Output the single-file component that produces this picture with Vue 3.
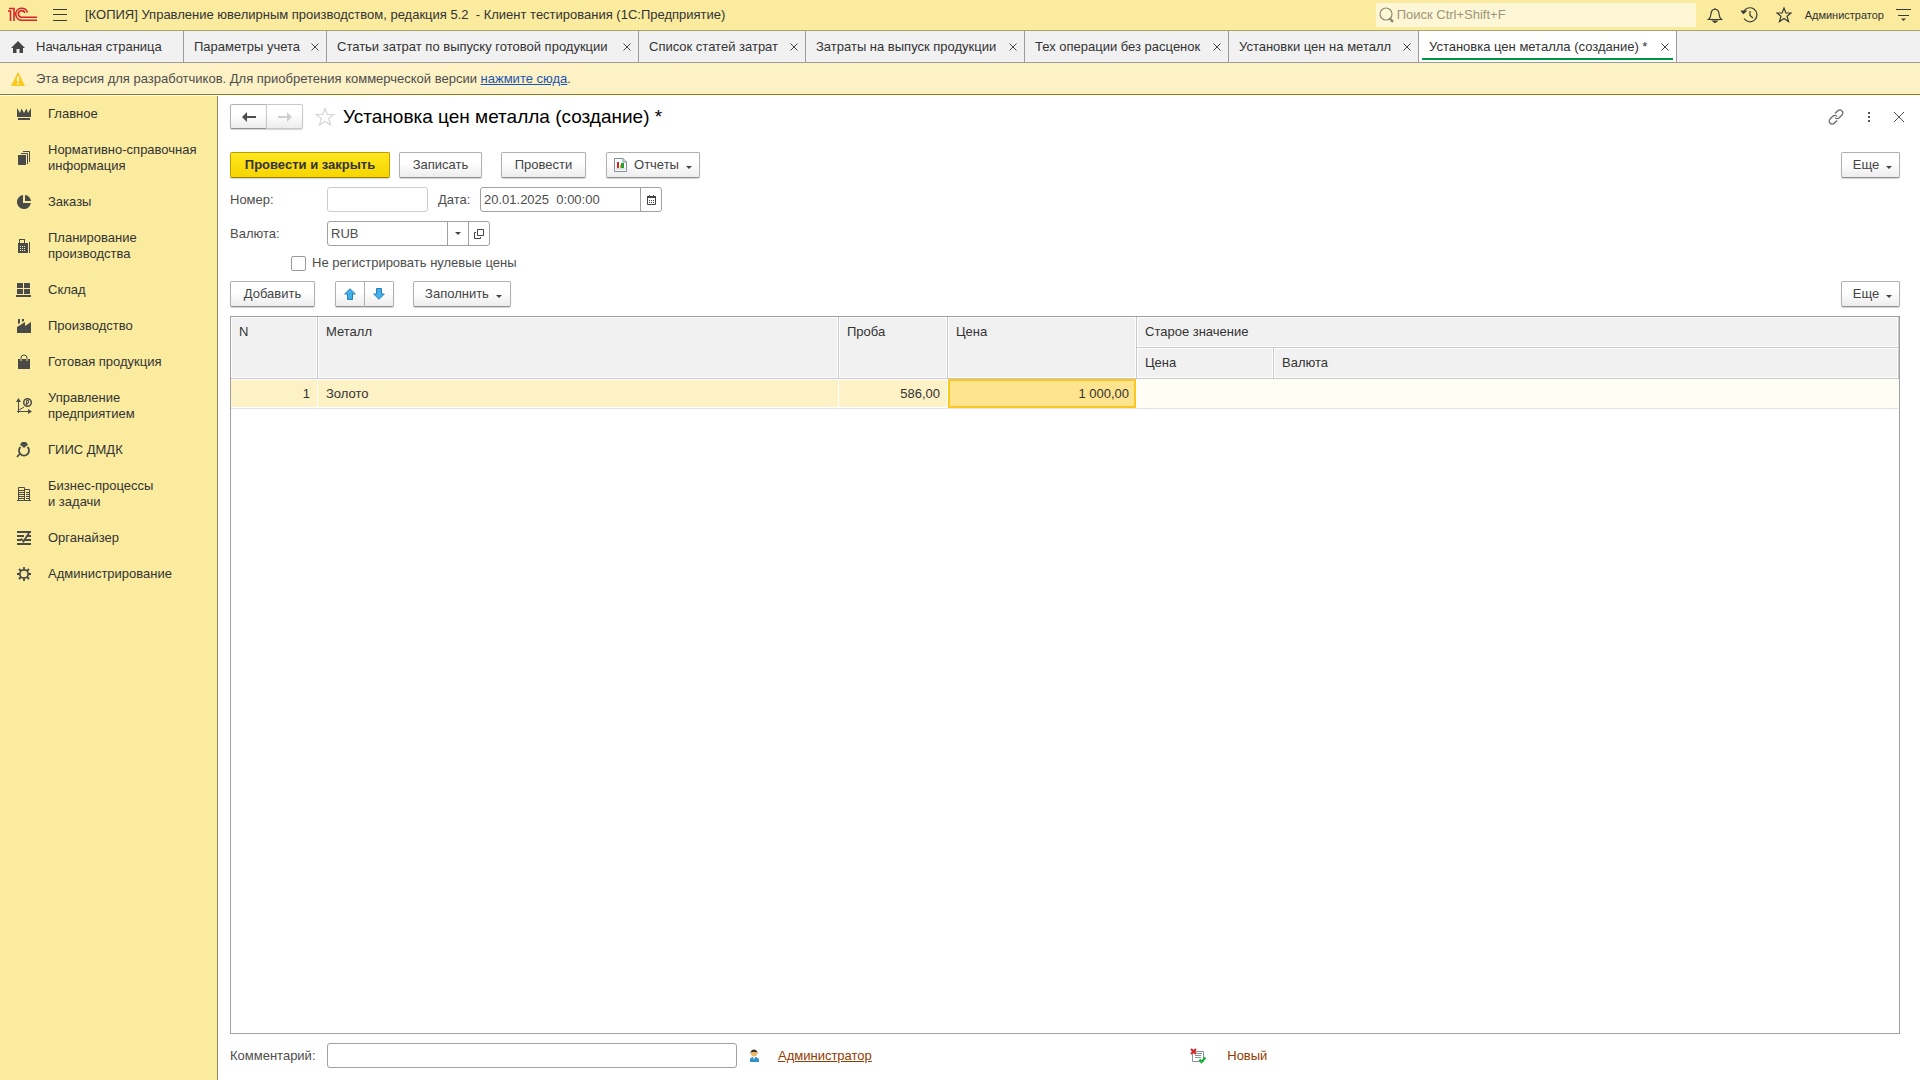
<script setup>
import { ref } from 'vue'

const tabs = [
  { title: 'Параметры учета', width: 143 },
  { title: 'Статьи затрат по выпуску готовой продукции', width: 312 },
  { title: 'Список статей затрат', width: 167 },
  { title: 'Затраты на выпуск продукции', width: 219 },
  { title: 'Тех операции без расценок', width: 204 },
  { title: 'Установки цен на металл', width: 190 },
  { title: 'Установка цен металла (создание) *', width: 258 }
]
const activeTab = ref(6)

const sections = [
  { title: ['Главное'], fill: 'M1 2L4 7L5.500 2.500L8 7L10.500 2.500L12 7L15 2V11H1ZM2 12H14V14H2Z' },
  { title: ['Нормативно-справочная', 'информация'], fill: 'M2 5H10V15H2Z', line: 'M5 3.5H11.5V14M7 1.5H13.500V12' },
  { title: ['Заказы'], fill: 'M7 1.100A7 7 0 1 0 14.900 9H7ZM9 1A6.500 6.500 0 0 1 15 7H9Z' },
  { title: ['Планирование', 'производства'], fill: 'M2 5H3V1H9V5H12V15H2ZM4 2V5H8V2ZM4 8V9H5V8ZM6 8V9H7V8ZM8 8V9H9V8ZM4 10V11H5V10ZM6 10V11H7V10ZM8 10V11H9V10ZM4 12V13H5V12ZM6 12V13H7V12ZM8 12V13H9V12ZM13 4H14V15H13Z' },
  { title: ['Склад'], fill: 'M1 1H7V6H1ZM8 1H14V6H8ZM1 7H7V12H1ZM8 7H14V12H8ZM0 13H15V15H0Z' },
  { title: ['Производство'], fill: 'M1 15V9L9 4V8L15 4V15ZM2 1H4V5L2 6ZM6 1H8V3L6 4Z' },
  { title: ['Готовая продукция'], fill: 'M2 5H14V15H2Z', line: 'M5 7V4A3 3 0 0 1 11 4V7', cut: 'M5 5V7M11 5V7' },
  { title: ['Управление', 'предприятием'], fill: 'M0 4L2.500 0L5 4ZM12 11L16 13.500L12 16Z', line: 'M2.500 2V15M1 13.500H14M3 12L8 9', ring: true },
  { title: ['ГИИС ДМДК'], fill: 'M4 2.500L6 0H10L12 2.500L8 6Z', bold: 'M4.500 5A5 5 0 1 0 11.500 5M4.500 11L1 15' },
  { title: ['Бизнес-процессы', 'и задачи'], line: 'M1 14.500H15M2.500 14V1.500H8.500V14M9 3.500H13.500V14M3 4.500H8M3 6.500H8M3 8.500H8M3 10.500H8M3 12.500H8M10 6.500H13M10 8.500H13M10 10.500H13M10 12.500H13' },
  { title: ['Органайзер'], bold: 'M1 2H15M1 6H8M11 6H15M1 10H5M9 10H15M1 14H15M5 8.500L7.500 11.500L13 3' },
  { title: ['Администрирование'], gear: true }
]

const rows = [{ n: 1, metal: 'Золото', probe: '586,00', price: '1 000,00', oldPrice: '', oldCurrency: '' }]

const number = ref('')
const date = ref('20.01.2025  0:00:00')
const currency = ref('RUB')
const skipZero = ref(false)
const comment = ref('')
const search = ref('')
</script>

<template>
  <div class="app">
    <header class="titlebar">
      <svg class="logo" width="30" height="16" viewBox="0 0 30 16" fill="none" stroke="#d8232a" stroke-width="1.600">
        <path d="M0 4H2.500V14M1 1.500H6V14" />
        <path d="M19.500 5.500A6 6 0 1 0 14 13.200H29" />
        <path d="M16.800 6A3.300 3.300 0 1 0 14 10.200H29" />
      </svg>
      <button class="flat menu" aria-label="Главное меню">
        <svg width="14" height="12" viewBox="0 0 14 12" stroke="#3a3a36" stroke-width="1"><path d="M0 .5H14M0 5.500H14M0 11.500H14" /></svg>
      </button>
      <span class="app-title">[КОПИЯ] Управление ювелирным производством, редакция 5.2&nbsp; - Клиент тестирования (1С:Предприятие)</span>
      <label class="search">
        <svg width="16" height="18" viewBox="0 0 16 18" fill="none" stroke="#8f8b70" stroke-width="1.200"><circle cx="7" cy="8" r="6" /><path d="M10.500 12L14 16" stroke-width="2.500" /></svg>
        <input v-model="search" type="text" placeholder="Поиск Ctrl+Shift+F" aria-label="Поиск" />
      </label>
      <div class="tools">
        <button class="flat" aria-label="Оповещения">
          <svg width="16" height="16" viewBox="0 0 16 16" fill="none" stroke="#3a3a36" stroke-width="1.200"><path d="M8 1V2M1.500 12.500H14.500C11.500 10.500 12.500 7 11.500 4.500C10.500 1.500 5.500 1.500 4.500 4.500C3.500 7 4.500 10.500 1.500 12.500Z" /><path d="M6 14H10L8 15.500Z" fill="#3a3a36" /></svg>
        </button>
        <button class="flat" aria-label="История">
          <svg width="17" height="16" viewBox="0 0 17 16" fill="none" stroke="#3a3a36" stroke-width="1.200"><path d="M2.500 5A7 7 0 1 1 3 11.500M9 4V8.500L12 11" /><path d="M0 4L2.500 6.500L5 4Z" fill="#3a3a36" /></svg>
        </button>
        <button class="flat" aria-label="Избранное">
          <svg width="16" height="16" viewBox="0 0 16 16" fill="none" stroke="#3a3a36" stroke-width="1.200"><path d="M8 1L9.900 6H15L11 9.200L12.500 14.500L8 11.400L3.500 14.500L5 9.200L1 6H6.100Z" /></svg>
        </button>
        <button class="flat user">Администратор</button>
        <button class="flat" aria-label="Настройка окна">
          <svg width="15" height="14" viewBox="0 0 15 14" stroke="#3a3a36" stroke-width="1"><path d="M0 1.500H15M2 7.500H13" /><path d="M5 10.500H10L7.500 13Z" fill="#3a3a36" stroke="none" /></svg>
        </button>
      </div>
    </header>

    <nav class="tabs">
      <button class="tab home">
        <svg width="14" height="12" viewBox="0 0 14 12" fill="#444"><path d="M7 0L14 7H12V12H8.500V8H5.500V12H2V7H0Z" /></svg>
        <span>Начальная страница</span>
      </button>
      <div v-for="(tab, i) in tabs" :key="tab.title" class="tab" :class="{ active: i === activeTab }" :style="{ width: tab.width + 'px' }">
        <button class="flat" @click="activeTab = i">{{ tab.title }}</button>
        <button class="flat close" aria-label="Закрыть вкладку">
          <svg width="8" height="8" viewBox="0 0 8 8" stroke="#444"><path d="M.5 .5L7.500 7.500M7.500 .5L.5 7.500" /></svg>
        </button>
      </div>
    </nav>

    <div class="notice">
      <svg width="14" height="14" viewBox="0 0 14 14"><path d="M7 0L14 14H0Z" fill="#fbc91e" /><path d="M7 4.500V9.500M7 11V12.500" stroke="#fff" stroke-width="1.600" /></svg>
      <p>Эта версия для разработчиков. Для приобретения коммерческой версии <a href="#">нажмите сюда</a>.</p>
    </div>

    <div class="body">
      <aside class="sidebar">
        <button v-for="s in sections" :key="s.title[0]" class="section">
          <svg width="16" height="16" viewBox="0 0 16 16" fill="none" stroke="#4a4a48">
            <path v-if="s.fill" :d="s.fill" fill="#4a4a48" fill-rule="evenodd" stroke="none" />
            <path v-if="s.line" :d="s.line" />
            <path v-if="s.bold" :d="s.bold" stroke-width="1.800" />
            <path v-if="s.cut" :d="s.cut" stroke="#faeb9f" />
            <g v-if="s.ring"><circle cx="11.500" cy="4.500" r="3.800" stroke-width="1.500" /><path d="M10.500 7V2.500H12.500V5H10M9.500 6H12" /></g>
            <g v-if="s.gear"><circle cx="8" cy="8" r="4.200" stroke-width="1.800" /><path d="M8 1V4M8 12V15M1 8H4M12 8H15M3 3L5 5M11 11L13 13M13 3L11 5M5 11L3 13" stroke-width="1.800" /></g>
          </svg>
          <span><template v-for="(line, i) in s.title" :key="line"><br v-if="i" />{{ line }}</template></span>
        </button>
      </aside>

      <main class="form">
        <div class="form-head">
          <div class="group">
            <button class="btn nav" aria-label="Назад">
              <svg width="14" height="10" viewBox="0 0 14 10" fill="#4d4d4d"><path d="M0 5L5 0V4H14V6H5V10Z" /></svg>
            </button>
            <button class="btn nav" aria-label="Вперед" disabled>
              <svg width="14" height="10" viewBox="0 0 14 10" fill="#cfcfcf"><path d="M14 5L9 0V4H0V6H9V10Z" /></svg>
            </button>
          </div>
          <button class="flat star" aria-label="В избранное">
            <svg width="20" height="20" viewBox="0 0 20 20" fill="none" stroke="#d4d6dc" stroke-width="1.200"><path d="M10 1.500L12.300 7.500H18.800L13.700 11.500L15.500 18L10 14.200L4.500 18L6.300 11.500L1.200 7.500H7.700Z" /></svg>
          </button>
          <h1>Установка цен металла (создание) *</h1>
          <div class="head-tools">
            <button class="flat" aria-label="Получить ссылку">
              <svg width="16" height="16" viewBox="0 0 16 16" fill="none" stroke="#666" stroke-width="1.200"><path d="M7 4.500L9.500 2C11.500 0 13 .8 14 2C15.200 3.200 15 4.700 14 6L11 9C9.700 10 8 10 7 8.500M9 11.500L6.500 14C4.500 16 3 15.200 2 14C.8 12.800 1 11.300 2 10L5 7C6.300 6 8 6 9 7.500" /></svg>
            </button>
            <button class="flat" aria-label="Дополнительно">
              <svg width="4" height="12" viewBox="0 0 4 12" fill="#555"><path d="M1 1H3V3H1ZM1 5H3V7H1ZM1 9H3V11H1Z" /></svg>
            </button>
            <button class="flat" aria-label="Закрыть">
              <svg width="10" height="10" viewBox="0 0 10 10" stroke="#555"><path d="M0 0L10 10M10 0L0 10" /></svg>
            </button>
          </div>
        </div>

        <div class="bar commands">
          <button class="btn primary">Провести и закрыть</button>
          <button class="btn save">Записать</button>
          <button class="btn post">Провести</button>
          <button class="btn reports">
            <svg width="13" height="14" viewBox="0 0 13 14" fill="none"><path d="M.5 .5H9L12.500 4V13.500H.5Z" fill="#fff" stroke="#7d8f9c" /><path d="M9 .5V4H12.500" stroke="#7d8f9c" /><path d="M3 4H5V10H3Z" fill="#e02020" /><path d="M6 7H7V10H6Z" fill="#f0a020" /><path d="M7 5H10V10H7Z" fill="#22a030" /><path d="M2 11H11" stroke="#b8c4cc" /></svg>
            Отчеты<i class="caret"></i>
          </button>
          <button class="btn more">Еще<i class="caret"></i></button>
        </div>

        <div class="field-row">
          <label class="caption" for="number">Номер:</label>
          <div class="field muted number"><input id="number" v-model="number" type="text" /></div>
          <label class="date-caption" for="date">Дата:</label>
          <div class="field date">
            <input id="date" v-model="date" type="text" />
            <button aria-label="Выбрать дату">
              <svg width="9" height="10" viewBox="0 0 9 10" fill="none" stroke="#444"><path d="M.5 2.500H8.500V9.500H.5Z" /><path d="M0 2H9" stroke-width="2" /><path d="M2.500 0V2M6.500 0V2" /><path d="M2 5.500H3M4 5.500H5M6 5.500H7M2 7.500H3M4 7.500H5M6 7.500H7" /></svg>
            </button>
          </div>
        </div>

        <div class="field-row">
          <label class="caption" for="currency">Валюта:</label>
          <div class="field currency">
            <input id="currency" v-model="currency" type="text" />
            <button aria-label="Выбрать из списка"><i class="caret"></i></button>
            <button aria-label="Открыть">
              <svg width="10" height="10" viewBox="0 0 10 10" fill="none" stroke="#444"><path d="M3.500 .5H9.500V6.500H3.500Z" /><path d="M2 3.500H.5V9.500H6.500V8" /></svg>
            </button>
          </div>
        </div>

        <label class="check"><input v-model="skipZero" type="checkbox" />Не регистрировать нулевые цены</label>

        <div class="bar list-bar">
          <button class="btn add">Добавить</button>
          <div class="group">
            <button class="btn move" aria-label="Переместить вверх">
              <svg width="12" height="12" viewBox="0 0 12 12" fill="#3fb0ec" stroke="#2b7fb4"><path d="M6 .7L11.300 6H8.500V11.500H3.500V6H.7Z" /></svg>
            </button>
            <button class="btn move" aria-label="Переместить вниз">
              <svg width="12" height="12" viewBox="0 0 12 12" fill="#3fb0ec" stroke="#2b7fb4"><path d="M6 11.300L.7 6H3.500V.5H8.500V6H11.300Z" /></svg>
            </button>
          </div>
          <button class="btn fill">Заполнить<i class="caret"></i></button>
          <button class="btn more">Еще<i class="caret"></i></button>
        </div>

        <div class="grid">
          <table>
            <colgroup>
              <col class="c-n" /><col class="c-metal" /><col class="c-probe" /><col class="c-price" /><col class="c-old" /><col />
            </colgroup>
            <thead>
              <tr>
                <th rowspan="2">N</th>
                <th rowspan="2">Металл</th>
                <th rowspan="2">Проба</th>
                <th rowspan="2">Цена</th>
                <th colspan="2">Старое значение</th>
              </tr>
              <tr>
                <th>Цена</th>
                <th>Валюта</th>
              </tr>
            </thead>
            <tbody>
              <tr v-for="row in rows" :key="row.n">
                <td class="num">{{ row.n }}</td>
                <td>{{ row.metal }}</td>
                <td class="num">{{ row.probe }}</td>
                <td class="num current">{{ row.price }}</td>
                <td class="old">{{ row.oldPrice }}</td>
                <td class="old">{{ row.oldCurrency }}</td>
              </tr>
            </tbody>
          </table>
        </div>

        <footer class="form-foot">
          <div class="foot-left">
            <label class="caption" for="comment">Комментарий:</label>
            <div class="field comment"><input id="comment" v-model="comment" type="text" /></div>
            <svg width="10" height="14" viewBox="0 0 10 14"><path d="M1 13V10L3 8H7L10 10V13Z" fill="#3490c4" /><path d="M4 8H6L5 11Z" fill="#fff" /><circle cx="5" cy="4.500" r="3" fill="#eab765" /><path d="M1.500 5C1 -1 9 -1 8.500 5L7.500 3H2.500Z" fill="#3c3128" /></svg>
            <a href="#">Администратор</a>
          </div>
          <div class="foot-right">
            <svg width="17" height="16" viewBox="0 0 17 16" fill="none"><path d="M2.500 3.500H13.500V13.500H2.500Z" fill="#fff" stroke="#8795a5" /><path d="M7 5.500H12M5 7.500H11M5 9.500H11" stroke="#8795a5" /><path d="M1 1L6 6M6 1L1 6" stroke="#d62828" stroke-width="2.200" /><path d="M9.500 11.500L11.500 14L15.500 9.500" stroke="#17b232" stroke-width="2.200" /></svg>
            <span>Новый</span>
          </div>
        </footer>
      </main>
    </div>
  </div>
</template>

<style>
body {
  margin: 0;
}
</style>

<style scoped>
.app {
  display: flex;
  flex-direction: column;
  min-height: 100vh;
  background: #fff;
  color: #333;
  font: 13px/16px "Liberation Sans", Arial, sans-serif;
}
.app * {
  box-sizing: border-box;
}
svg {
  display: block;
  flex: none;
}
button,
input {
  font: inherit;
  color: inherit;
}
.flat {
  display: flex;
  align-items: center;
  padding: 0;
  border: 0;
  background: none;
  white-space: nowrap;
}

.titlebar {
  display: flex;
  align-items: center;
  height: 31px;
  padding: 0 9px 0 8px;
  background: #faeb9f;
  border-bottom: 1px solid #aba36c;
}
.menu {
  margin: 0 18px 0 15px;
}
.app-title {
  flex: 1;
  white-space: nowrap;
}
.search {
  display: flex;
  align-items: center;
  gap: 2px;
  width: 320px;
  height: 24px;
  padding-left: 3px;
  background: #fdf7d6;
  border-radius: 2px;
}
.search input {
  flex: 1;
  min-width: 0;
  padding: 0;
  border: 0;
  outline: 0;
  background: none;
}
.search input::placeholder {
  color: #9b967a;
}
.tools {
  display: flex;
  align-items: center;
  gap: 18px;
  margin-left: 11px;
}
.user {
  margin: 0 -6px 0 -5px;
  font-size: 11px;
}

.tabs {
  display: flex;
  height: 32px;
  background: #f1f1f1;
  border-bottom: 1px solid #9c9c9c;
}
.tab {
  position: relative;
  display: flex;
  align-items: center;
  justify-content: space-between;
  padding: 0 7px 0 10px;
  border: 0;
  border-right: 1px solid #9c9c9c;
  background: none;
  white-space: nowrap;
}
.home {
  justify-content: flex-start;
  gap: 11px;
  width: 184px;
  padding-left: 11px;
}
.tab.active {
  background: #fff;
}
.tab.active::after {
  content: "";
  position: absolute;
  left: 3px;
  right: 3px;
  bottom: 2px;
  height: 2px;
  background: #009646;
}

.notice {
  display: flex;
  align-items: center;
  gap: 11px;
  height: 32px;
  padding: 0 11px;
  background: #fdf1c6;
  border-bottom: 1px solid #94791a;
  color: #4d4d4d;
}
.notice p {
  margin: 0;
}
.notice a {
  color: #1a55b0;
}

.body {
  flex: 1;
  display: flex;
  padding-top: 1px;
}
.sidebar {
  flex: none;
  width: 218px;
  background: #faeb9f;
  border-right: 1px solid #948a5c;
}
.section {
  display: flex;
  align-items: center;
  gap: 16px;
  width: 100%;
  padding: 10px 0 10px 16px;
  border: 0;
  background: none;
  text-align: left;
  white-space: nowrap;
}

.form {
  flex: 1;
  min-width: 0;
  display: flex;
  flex-direction: column;
  padding: 8px 20px 12px 12px;
  color: #4d4d4d;
}
.form-head {
  display: flex;
  align-items: center;
  height: 25px;
}
.group {
  display: flex;
}
.group .btn + .btn {
  margin-left: -1px;
  border-radius: 0 2px 2px 0;
}
.group .btn:first-child {
  border-radius: 2px 0 0 2px;
}
.btn {
  display: flex;
  align-items: center;
  justify-content: center;
  height: 26px;
  padding: 0;
  border: 1px solid #b0b0b0;
  border-bottom-color: #8f8f8f;
  border-radius: 2px;
  background: linear-gradient(#fff 40%, #ededed);
  box-shadow: 0 1px 1px #d4d4d4;
  color: #444;
  white-space: nowrap;
}
.nav {
  width: 37px;
  height: 25px;
}
.nav:disabled {
  border-color: #c8c8c8;
}
.star {
  margin: 0 8px 0 12px;
}
h1 {
  flex: 1;
  margin: 0;
  color: #000;
  font-size: 19px;
  line-height: 24px;
  font-weight: 400;
}
.head-tools {
  display: flex;
  align-items: center;
  gap: 23px;
  margin-right: -4px;
}

.bar {
  display: flex;
}
.commands {
  margin: 23px 0 9px;
}
.caret {
  border: 3px solid transparent;
  border-top-color: #444;
  border-bottom: 0;
}
.btn .caret {
  margin: 4px 0 0 7px;
}
.primary {
  width: 160px;
  background: linear-gradient(#ffe61f, #f6d500);
  border-color: #b89e00;
  border-bottom-color: #9a8400;
  color: #333;
  font-weight: 700;
}
.save {
  width: 83px;
  margin-left: 9px;
}
.post {
  width: 85px;
  margin-left: 19px;
}
.reports {
  width: 94px;
  margin-left: 20px;
}
.reports svg {
  margin-right: 7px;
}
.more {
  width: 59px;
  margin-left: auto;
  padding-left: 4px;
}

.field-row {
  display: flex;
  align-items: center;
  margin-bottom: 9px;
}
.caption {
  flex: none;
  width: 97px;
}
.date-caption {
  width: 42px;
  margin-left: 10px;
}
.field {
  display: flex;
  height: 25px;
  border: 1px solid #a0a0a0;
  border-radius: 3px;
  background: #fff;
}
.field input {
  flex: 1;
  min-width: 0;
  padding: 0 3px;
  border: 0;
  outline: 0;
  background: none;
}
.field button {
  display: flex;
  align-items: center;
  justify-content: center;
  width: 21px;
  padding: 0;
  border: 0;
  border-left: 1px solid #a0a0a0;
  background: none;
}
.muted {
  border-color: #cdcdcd;
}
.number {
  width: 101px;
}
.date {
  width: 182px;
}
.currency {
  width: 163px;
}

.check {
  display: flex;
  align-items: center;
  gap: 6px;
  align-self: flex-start;
  margin: 0 0 10px 61px;
}
.check input {
  appearance: none;
  width: 15px;
  height: 15px;
  margin: 0;
  border: 1px solid #999;
  border-radius: 2px;
}
.check input:checked {
  background: #4d4d4d;
}
.list-bar {
  margin-bottom: 9px;
}
.add {
  width: 85px;
}
.list-bar .group {
  margin-left: 20px;
}
.move {
  width: 30px;
}
.fill {
  width: 98px;
  margin-left: 19px;
  padding-left: 3px;
}

.grid {
  flex: 1;
  border: 1px solid #a0a0a0;
}
table {
  width: 100%;
  table-layout: fixed;
  border-collapse: separate;
  border-spacing: 0;
  color: #333;
}
.c-n {
  width: 87px;
}
.c-metal {
  width: 521px;
}
.c-probe {
  width: 109px;
}
.c-price {
  width: 189px;
}
.c-old {
  width: 137px;
}
th {
  height: 31px;
  padding: 7px 8px 6px;
  border: 1px solid #c9c9cc;
  border-width: 0 1px 1px 0;
  background: #f1f1f1;
  box-shadow: inset 0 0 0 1px #fff;
  font-weight: 400;
  text-align: left;
  vertical-align: top;
}
td {
  height: 30px;
  padding: 0 8px;
  border-right: 1px solid #fff;
  border-bottom: 1px solid #e2e2e2;
  background: #fdf1c6;
  box-shadow: inset 0 1px #fff, inset 0 -1px #fff;
}
td.num {
  padding-right: 7px;
  text-align: right;
}
td.current {
  background: #ffe48f;
  box-shadow: inset 0 0 0 2px #fcc81f;
}
td.old {
  background: #fffef5;
  box-shadow: none;
}

.form-foot {
  display: flex;
  align-items: center;
  margin-top: 9px;
}
.foot-left {
  display: flex;
  align-items: center;
  width: 57.5%;
}
.comment {
  width: 410px;
  margin-right: 12px;
}
.foot-left a {
  margin-left: 19px;
}
.foot-left a,
.foot-right {
  color: #933a00;
}
.foot-right {
  display: flex;
  align-items: center;
  gap: 20px;
}
</style>
